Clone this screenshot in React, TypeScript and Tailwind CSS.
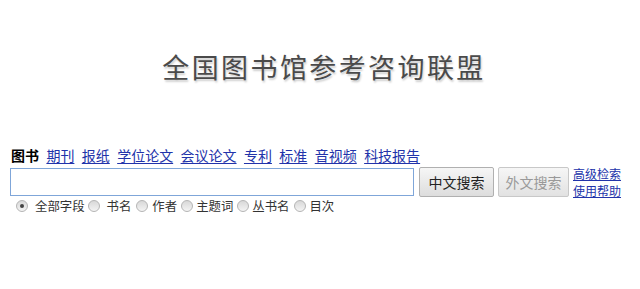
import React from "react";

const font = { fontFamily: '"Noto Sans CJK SC", "Liberation Sans", sans-serif' };

function Radio({ checked }: { checked?: boolean }) {
  return (
    <span className="inline-block shrink-0 w-[12px] h-[12px] rounded-full border border-[#b5b5b5] bg-gradient-to-b from-[#d8d8d8] to-[#f4f4f4] relative">
      {checked && <span className="absolute left-[3px] top-[3px] w-[4px] h-[4px] rounded-full bg-[#444]" />}
    </span>
  );
}

export default function App() {
  const links = ["期刊", "报纸", "学位论文", "会议论文", "专利", "标准", "音视频", "科技报告"];
  const radios = [
    { t: "全部字段", c: true, cls: "ml-[7px] mr-[3px]" },
    { t: "书名", c: false, cls: "ml-[7px] mr-[5px]" },
    { t: "作者", c: false, cls: "ml-[4px] mr-[4px]" },
    { t: "主题词", c: false, cls: "ml-[3px] mr-[4px]" },
    { t: "丛书名", c: false, cls: "ml-[3px] mr-[5px]" },
    { t: "目次", c: false, cls: "ml-[3px]" },
  ];
  return (
    <div className="w-[640px] h-[289px] bg-white relative" style={font}>
      <div className="pt-[47px] flex justify-center">
        <div className="text-[27px] leading-[40px] tracking-[2.4px] text-[#4a4a4a] pl-[8px] [text-shadow:1px_2px_2px_rgba(0,0,0,0.2)]">
          全国图书馆参考咨询联盟
        </div>
      </div>
      <div className="mt-[60px] pl-[11px] flex items-end gap-[7.4px] text-[14px] leading-[16px]">
        <span className="font-bold text-black">图书</span>
        {links.map((l) => (
          <a key={l} className="text-[#2233aa] underline underline-offset-[2px]">{l}</a>
        ))}
      </div>
      <div className="mt-[3px] pl-[10px] flex items-start">
        <div className="w-[404px] h-[28px] mt-[2px] border border-[#7fa6d9] bg-white" />
        <button className="ml-[5px] w-[75px] h-[30px] mt-[1px] border border-[#b0b0b0] rounded-[2px] bg-gradient-to-b from-[#f6f6f6] to-[#dddddd] text-[14px] text-[#222]">
          中文搜索
        </button>
        <button className="ml-[4px] w-[71px] h-[30px] mt-[1px] border border-[#c8c8c8] rounded-[2px] bg-gradient-to-b from-[#f6f6f6] to-[#e2e2e2] text-[14px] text-[#999]">
          外文搜索
        </button>
        <div className="ml-[4px] flex flex-col text-[12px] leading-[16px] text-[#2233aa]">
          <a className="underline">高级检索</a>
          <a className="underline mt-[1px]">使用帮助</a>
        </div>
      </div>
      <div className="pl-[16px] -mt-[1px] flex items-center text-[12.4px] leading-[16px] text-[#333]">
        {radios.map((r) => (
          <span key={r.t} className="flex items-center">
            <Radio checked={r.c} />
            <span className={r.cls}>{r.t}</span>
          </span>
        ))}
      </div>
    </div>
  );
}
